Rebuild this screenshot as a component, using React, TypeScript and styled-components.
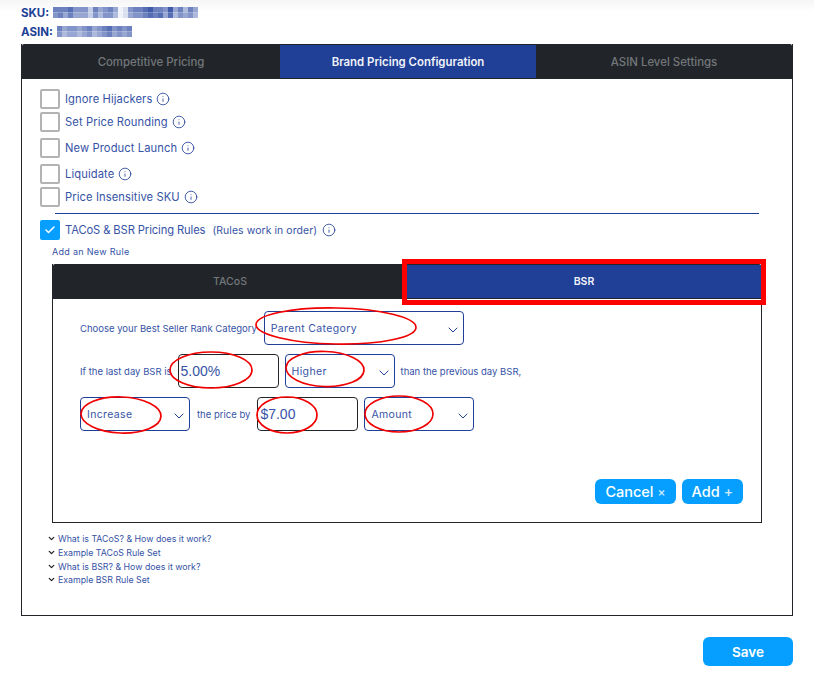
import React from "react";
import styled, { createGlobalStyle } from "styled-components";
import { Check, ChevronDown, Info } from "lucide-react";

const GlobalStyle = createGlobalStyle`
  * { box-sizing: border-box; }
  html, body { margin: 0; padding: 0; background: #fff; }
  body { font-family: "Inter", "Liberation Sans", sans-serif; color: #2b4a9f; }
`;

const Page = styled.div`
  width: 814px;
  height: 685px;
  padding: 6px 21px 0;
  overflow: hidden;
  background: linear-gradient(#f6f6f6, #ffffff 12px);
`;

const MetaRow = styled.div<{ $height: number }>`
  display: flex;
  align-items: center;
  gap: 4px;
  height: ${(p) => p.$height}px;
  font-size: 11.5px;
  font-weight: 700;
  color: #203f96;
`;

const Panel = styled.div`
  height: 572px;
  border: 1px solid #212529;
  border-top: 0;
  display: flex;
  flex-direction: column;
`;

const TabBar = styled.div<{ $cols: string }>`
  display: grid;
  grid-template-columns: ${(p) => p.$cols};
  height: 35px;
  background: #212529;
  border-radius: 2px 2px 0 0;
  flex: none;
`;

const Tab = styled.div<{ $active?: boolean; $size?: number }>`
  position: relative;
  display: flex;
  align-items: center;
  justify-content: center;
  margin: ${(p) => (p.$active ? "1px 0 1px" : "0")};
  font-size: ${(p) => p.$size ?? 11.4}px;
  font-weight: ${(p) => (p.$active ? 600 : 500)};
  color: ${(p) => (p.$active ? "#f1f3fa" : "#73777b")};
  background: ${(p) => (p.$active ? "#203f96" : "transparent")};
`;

const Highlight = styled.div`
  position: absolute;
  inset: -6px -5px -7px -5px;
  border: 5px solid #fe0000;
`;

const PanelBody = styled.div`
  padding: 10px 33px 0 18px;
  flex: 1;
`;

const CheckRow = styled.div<{ $top?: number }>`
  display: flex;
  align-items: center;
  gap: 4px;
  height: 20px;
  margin-top: ${(p) => p.$top ?? 0}px;
  font-size: 11.2px;
  letter-spacing: 0.1px;
  color: #3653a6;
`;

const Box = styled.span<{ $checked?: boolean }>`
  display: flex;
  align-items: center;
  justify-content: center;
  width: 20px;
  height: 20px;
  margin-right: 1px;
  flex: none;
  border-radius: 2px;
  border: ${(p) => (p.$checked ? "0" : "2px solid #b3b3b3")};
  background: ${(p) => (p.$checked ? "#069fff" : "#fff")};
  color: #fff;
`;

const InfoMark = styled(Info)`
  color: #203f96;
`;

const RuleTitle = styled.span`
  letter-spacing: -0.1px;
`;

const Note = styled.span`
  margin-left: 3px;
  margin-right: 1px;
  font-size: 10.4px;
`;

const Divider = styled.hr`
  height: 1px;
  margin: 6px 0 6px 15px;
  border: 0;
  background: #203f96;
`;

const AddLabel = styled.div`
  margin: 7px 0 7px 12px;
  height: 10px;
  line-height: 10px;
  font-size: 9px;
  letter-spacing: 0.3px;
  color: #3653a6;
`;

const RuleBox = styled.div`
  margin: 0 -3px 0 12px;
  display: flex;
  flex-direction: column;
  height: 259px;
  border: 1px solid #212529;
  border-top: 0;
`;

const RuleBody = styled.div`
  position: relative;
  flex: 1;
  display: flex;
  flex-direction: column;
  padding: 12px 18px 18px 27px;
`;

const FormRow = styled.div<{ $top?: number }>`
  display: flex;
  align-items: center;
  gap: 6px;
  height: 34px;
  margin-top: ${(p) => p.$top ?? 0}px;
`;

const Caption = styled.span<{ $before?: number; $after?: number }>`
  padding: 0 ${(p) => p.$after ?? 0}px 0 ${(p) => p.$before ?? 0}px;
  white-space: nowrap;
  font-size: 9.5px;
  color: #3653a6;
`;

const SelectBox = styled.div<{ $width: number }>`
  display: flex;
  align-items: center;
  justify-content: space-between;
  width: ${(p) => p.$width}px;
  height: 34px;
  padding: 0 2px 0 6px;
  flex: none;
  border: 1px solid #203f96;
  border-radius: 4px;
  font-size: 10.5px;
  letter-spacing: 0.35px;
  color: #3653a6;
`;

const SelectArrow = styled(ChevronDown)`
  margin-top: 4px;
  color: #203f96;
`;

const ValueInput = styled.input`
  width: 101px;
  height: 34px;
  padding: 0 2px;
  flex: none;
  border: 1px solid #212529;
  border-radius: 4px;
  outline: 0;
  background: #fff;
  font-family: "Liberation Sans", sans-serif;
  font-size: 14px;
  color: #3653a6;
`;

const ActionRow = styled.div`
  margin-top: auto;
  display: flex;
  justify-content: flex-end;
  gap: 6px;
`;

const ActionButton = styled.button`
  display: flex;
  align-items: center;
  justify-content: center;
  gap: 4px;
  height: 25px;
  padding: 0 10px;
  border: 0;
  border-radius: 6px;
  background: #069fff;
  color: #fff;
  font-family: inherit;
  font-size: 14.5px;
  font-weight: 500;
`;

const ActionMark = styled.span<{ $size: number }>`
  font-size: ${(p) => p.$size}px;
  opacity: 0.8;
`;

const HelpList = styled.div`
  margin: 9px 0 0 7px;
  display: flex;
  flex-direction: column;
`;

const HelpRow = styled.div`
  display: flex;
  align-items: center;
  gap: 2px;
  height: 13.7px;
  font-size: 8.8px;
  color: #3653a6;
`;

const SaveRow = styled.div`
  margin-top: 21px;
  display: flex;
  justify-content: flex-end;
`;

const SaveButton = styled.button`
  width: 90px;
  height: 29px;
  border: 0;
  border-radius: 6px;
  background: #069fff;
  color: #fff;
  font-family: inherit;
  font-size: 13.5px;
  font-weight: 600;
`;

const Overlay = styled.svg`
  position: absolute;
  left: 0;
  top: 0;
  width: 100%;
  height: 100%;
  pointer-events: none;
`;

// redacted values in the screenshot: darkness of each mosaic cell, 0 = white
const skuRows = ["66675552645640156678665846364", "56464442535530145567674735453"];
const asinRows = ["645545645675656", "534434534564545"];

const cellColor = (d: number) => `rgb(${240 - d * 22}, ${243 - d * 19}, ${250 - d * 10})`;

const Mosaic = ({ rows }: { rows: string[] }) => (
  <svg width={rows[0].length * 5} height={rows.length * 5.5}>
    {rows.map((row, y) =>
      row.split("").map((d, x) => (
        <rect key={x} x={x * 5} y={y * 5.5} width={5} height={5.5} fill={cellColor(Number(d))} />
      ))
    )}
  </svg>
);

const Select = ({ width, label }: { width: number; label: string }) => (
  <SelectBox $width={width}>
    {label}
    <SelectArrow size={16} strokeWidth={1.5} />
  </SelectBox>
);

const options = [
  { label: "Ignore Hijackers", top: 0 },
  { label: "Set Price Rounding", top: 3 },
  { label: "New Product Launch", top: 6 },
  { label: "Liquidate", top: 6 },
  { label: "Price Insensitive SKU", top: 3 },
];

const helpLinks = [
  "What is TACoS? & How does it work?",
  "Example TACoS Rule Set",
  "What is BSR? & How does it work?",
  "Example BSR Rule Set",
];

export default function App() {
  return (
    <Page>
      <GlobalStyle />
      <MetaRow $height={13}>
        SKU: <Mosaic rows={skuRows} />
      </MetaRow>
      <MetaRow $height={25}>
        ASIN: <Mosaic rows={asinRows} />
      </MetaRow>

      <Panel>
        <TabBar $cols="258px 256px 1fr">
          <Tab>Competitive Pricing</Tab>
          <Tab $active>Brand Pricing Configuration</Tab>
          <Tab>ASIN Level Settings</Tab>
        </TabBar>

        <PanelBody>
          {options.map((o) => (
            <CheckRow key={o.label} $top={o.top}>
              <Box />
              {o.label}
              <InfoMark size={14} strokeWidth={1.4} />
            </CheckRow>
          ))}
          <Divider />
          <CheckRow>
            <Box $checked>
              <Check size={12} strokeWidth={3} />
            </Box>
            <RuleTitle>TACoS &amp; BSR Pricing Rules</RuleTitle>
            <Note>(Rules work in order)</Note>
            <InfoMark size={14} strokeWidth={1.4} />
          </CheckRow>
          <AddLabel>Add an New Rule</AddLabel>

          <RuleBox>
            <TabBar $cols="354px 1fr">
              <Tab $size={10.5}>TACoS</Tab>
              <Tab $active $size={10.5}>
                BSR
                <Highlight />
              </Tab>
            </TabBar>
            <RuleBody>
              <FormRow>
                <Caption $after={1}>Choose your Best Seller Rank Category</Caption>
                <Select width={200} label="Parent Category" />
              </FormRow>
              <FormRow $top={9}>
                <Caption>If the last day BSR is</Caption>
                <ValueInput defaultValue="5.00%" />
                <Select width={110} label="Higher" />
                <Caption>than the previous day BSR,</Caption>
              </FormRow>
              <FormRow $top={9}>
                <Select width={110} label="Increase" />
                <Caption $before={1} $after={1}>the price by</Caption>
                <ValueInput defaultValue="$7.00" />
                <Select width={110} label="Amount" />
              </FormRow>
              <ActionRow>
                <ActionButton>
                  Cancel <ActionMark $size={12}>×</ActionMark>
                </ActionButton>
                <ActionButton>
                  Add <ActionMark $size={14}>+</ActionMark>
                </ActionButton>
              </ActionRow>
              <Overlay viewBox="0 0 708 223" fill="none" stroke="#f00000" strokeWidth={1.7}>
                <ellipse cx={283} cy={27} rx={80} ry={18} transform="rotate(1 283 27)" />
                <ellipse cx={158} cy={71} rx={41} ry={18} />
                <ellipse cx={272} cy={70} rx={39} ry={17.5} transform="rotate(2 272 70)" />
                <ellipse cx={68} cy={116} rx={40} ry={18} transform="rotate(2 68 116)" />
                <ellipse cx={234} cy={116} rx={30} ry={18} />
                <ellipse cx={346} cy={115} rx={34} ry={18} />
              </Overlay>
            </RuleBody>
          </RuleBox>

          <HelpList>
            {helpLinks.map((l) => (
              <HelpRow key={l}>
                <ChevronDown size={9} strokeWidth={3.5} color="#212529" />
                {l}
              </HelpRow>
            ))}
          </HelpList>
        </PanelBody>
      </Panel>

      <SaveRow>
        <SaveButton>Save</SaveButton>
      </SaveRow>
    </Page>
  );
}
